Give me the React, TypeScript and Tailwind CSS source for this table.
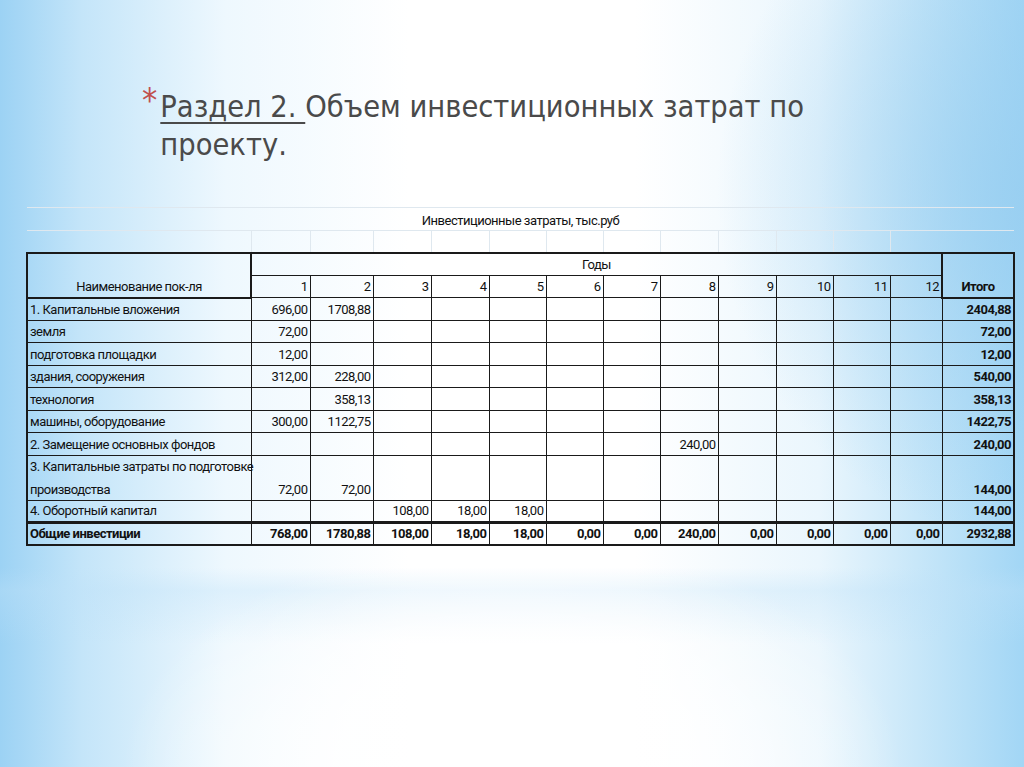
import React from "react";

type Row = {
  name: string[];
  v: Record<number, string>;
  total: string;
  tall?: boolean;
};

const rows: Row[] = [
  { name: ["1. Капитальные вложения"], v: { 1: "696,00", 2: "1708,88" }, total: "2404,88" },
  { name: ["земля"], v: { 1: "72,00" }, total: "72,00" },
  { name: ["подготовка площадки"], v: { 1: "12,00" }, total: "12,00" },
  { name: ["здания, сооружения"], v: { 1: "312,00", 2: "228,00" }, total: "540,00" },
  { name: ["технология"], v: { 2: "358,13" }, total: "358,13" },
  { name: ["машины, оборудование"], v: { 1: "300,00", 2: "1122,75" }, total: "1422,75" },
  { name: ["2. Замещение основных фондов"], v: { 8: "240,00" }, total: "240,00" },
  {
    name: ["3. Капитальные затраты по подготовке", "производства"],
    v: { 1: "72,00", 2: "72,00" },
    total: "144,00",
    tall: true,
  },
  { name: ["4. Оборотный капитал"], v: { 3: "108,00", 4: "18,00", 5: "18,00" }, total: "144,00" },
];

const totals = [
  "768,00",
  "1780,88",
  "108,00",
  "18,00",
  "18,00",
  "0,00",
  "0,00",
  "240,00",
  "0,00",
  "0,00",
  "0,00",
  "0,00",
];

const widths = [224, 59, 63, 58, 58, 57, 57, 57, 58, 58, 57, 57, 52, 72];
const years = [1, 2, 3, 4, 5, 6, 7, 8, 9, 10, 11, 12];

const cell = "border border-[#1a1a1a] align-bottom p-0 pb-[1px] whitespace-nowrap";

export default function App() {
  return (
    <div className="w-[1024px] h-[767px] overflow-hidden bg-[radial-gradient(ellipse_38%_30%_at_50%_100%,#ffffff_0%,rgba(255,255,255,0.85)_45%,rgba(255,255,255,0)_100%),radial-gradient(ellipse_30%_45%_at_100%_25%,rgba(150,205,240,0.75)_0%,rgba(150,205,240,0)_100%),linear-gradient(180deg,rgba(255,255,255,0)_0%,rgba(255,255,255,0)_74%,rgba(190,225,248,0.35)_77%,rgba(255,255,255,0)_84%),linear-gradient(90deg,#9cd2f4_0%,#c4e5f9_8%,#eef8fe_22%,#ffffff_40%,#ffffff_62%,#eaf6fd_80%,#bfe3f8_92%,#a2d6f5_100%)]">
      <div className="flex items-start pl-[142px] pt-[88px]">
        <span
          className="text-[#c0504d] text-[34px] leading-[30px] mr-[3px] -mt-[3px]"
          style={{ fontFamily: '"DejaVu Sans Condensed", "DejaVu Sans", sans-serif' }}
        >
          *
        </span>
        <div
          className="text-[#4a4a4a] text-[30.5px] leading-[38px]"
          style={{ fontFamily: '"DejaVu Sans Condensed", "DejaVu Sans", sans-serif' }}
        >
          <span className="underline decoration-[2px] underline-offset-[5px]">Раздел 2. </span>
          Объем инвестиционных затрат по
          <br />
          проекту.
        </div>
      </div>

      <div className="pl-[26px] pt-[43px]">
        <table
          className="w-[987px] table-fixed border-collapse text-[13px] leading-[18px] tracking-[-0.5px] text-[#111]"
          style={{ fontFamily: 'Roboto, "DejaVu Sans Condensed", sans-serif' }}
        >
          <colgroup>
            {widths.map((w, i) => (
              <col key={i} style={{ width: w }} />
            ))}
          </colgroup>
          <tbody>
            <tr className="h-[22.5px]">
              <td colSpan={14} className="border-t border-[#dfe8ef] p-0 pb-[0px] text-center align-bottom">
                Инвестиционные затраты, тыс.руб
              </td>
            </tr>
            <tr className="h-[22.5px]">
              {widths.map((_, i) => (
                <td
                  key={i}
                  className={
                    "p-0 border-t border-[#dfe8ef] " +
                    (i > 0 && i < 13 ? "border-l border-l-[#dfe8ef]" : "")
                  }
                />
              ))}
            </tr>
            <tr className="h-[22.5px]">
              <td rowSpan={2} className={cell + " border-2 text-center"}>
                Наименование пок-ля
              </td>
              <td colSpan={12} className={cell + " border-t-2 text-center"}>
                Годы
              </td>
              <td rowSpan={2} className={cell + " border-2 text-center font-bold"}>
                Итого
              </td>
            </tr>
            <tr className="h-[22.5px]">
              {years.map((y) => (
                <td key={y} className={cell + " text-right pr-[2px]"}>
                  {y}
                </td>
              ))}
            </tr>
            {rows.map((r, ri) => (
              <tr key={ri} className={r.tall ? "h-[45px]" : "h-[22.5px]"}>
                <td className={cell + " border-l-2 text-left pl-[2px]"}>
                  {r.name.map((n, k) => (
                    <div key={k} className={r.tall && k === 0 ? "h-[23px] leading-[18px]" : ""}>
                      {n}
                    </div>
                  ))}
                </td>
                {years.map((y) => (
                  <td key={y} className={cell + " text-right pr-[2px]"}>
                    {r.v[y] ?? ""}
                  </td>
                ))}
                <td className={cell + " border-r-2 text-right pr-[2px] font-bold"}>{r.total}</td>
              </tr>
            ))}
            <tr className="h-[22.5px] font-bold">
              <td className={cell + " border-l-2 border-b-2 border-t-[3px] text-left pl-[2px]"}>
                Общие инвестиции
              </td>
              {totals.map((t, i) => (
                <td key={i} className={cell + " border-b-2 border-t-[3px] text-right pr-[2px]"}>
                  {t}
                </td>
              ))}
              <td className={cell + " border-r-2 border-b-2 border-t-[3px] text-right pr-[2px]"}>2932,88</td>
            </tr>
          </tbody>
        </table>
      </div>
    </div>
  );
}
